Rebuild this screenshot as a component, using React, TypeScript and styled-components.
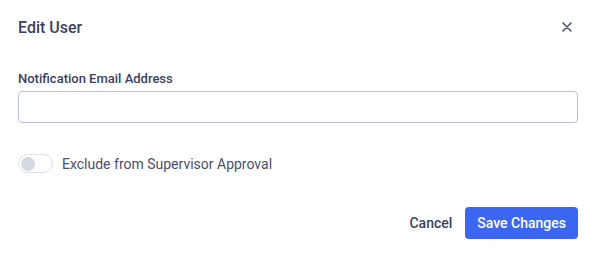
import React, { useState } from "react";
import styled, { createGlobalStyle } from "styled-components";

const GlobalStyle = createGlobalStyle`
  html, body {
    margin: 0;
    background: #ffffff;
    font-family: Roboto, "Liberation Sans", Arial, sans-serif;
  }
`;

const Modal = styled.div`
  width: 595px;
  height: 253px;
  box-sizing: border-box;
  padding: 0 17px 0 18px;
  display: flex;
  flex-direction: column;
`;

const Header = styled.div`
  display: flex;
  align-items: center;
  justify-content: space-between;
  height: 54px;
`;

const Title = styled.h2`
  margin: 0;
  font-size: 16px;
  font-weight: 500;
  color: #3b4261;
`;

const CloseButton = styled.button`
  border: none;
  background: none;
  padding: 0;
  margin-right: 6px;
  width: 10px;
  height: 10px;
  display: flex;
  align-items: center;
  justify-content: center;
  color: #4a5270;
  cursor: pointer;
`;

const Field = styled.div`
  display: flex;
  flex-direction: column;
  gap: 5px;
  margin-top: 17px;
`;

const Label = styled.label`
  font-size: 13px;
  line-height: 15px;
  font-weight: 500;
  color: #3b4261;
`;

const Input = styled.input`
  box-sizing: border-box;
  width: 100%;
  height: 32px;
  border: 1px solid #b8c2dd;
  border-radius: 4px;
  padding: 0 10px;
  font: inherit;
  font-size: 14px;
  outline: none;
`;

const ToggleRow = styled.label`
  display: flex;
  align-items: center;
  gap: 9px;
  margin-top: 31px;
  font-size: 14px;
  color: #4a4f6b;
  cursor: pointer;
`;

const Track = styled.span<{ $on: boolean }>`
  box-sizing: border-box;
  width: 35px;
  height: 19px;
  border-radius: 10px;
  border: 1px solid ${(p) => (p.$on ? "#3a66f0" : "#dde1ec")};
  background: ${(p) => (p.$on ? "#3a66f0" : "#ffffff")};
  display: flex;
  align-items: center;
  padding: 0 2px;
  justify-content: ${(p) => (p.$on ? "flex-end" : "flex-start")};
`;

const Knob = styled.span<{ $on: boolean }>`
  width: 14px;
  height: 14px;
  border-radius: 50%;
  background: ${(p) => (p.$on ? "#ffffff" : "#d5d9e4")};
`;

const Footer = styled.div`
  display: flex;
  justify-content: flex-end;
  align-items: center;
  gap: 13px;
  margin-top: 34px;
`;

const Button = styled.button<{ $primary?: boolean }>`
  height: 32px;
  border-radius: 4px;
  border: none;
  font-family: inherit;
  font-size: 14px;
  font-weight: 500;
  padding: ${(p) => (p.$primary ? "0 12px" : "0")};
  background: ${(p) => (p.$primary ? "#3b66f1" : "transparent")};
  color: ${(p) => (p.$primary ? "#ffffff" : "#3b4261")};
  cursor: pointer;
`;

export default function App() {
  const [on, setOn] = useState(false);
  return (
    <>
      <GlobalStyle />
      <Modal>
        <Header>
          <Title>Edit User</Title>
          <CloseButton aria-label="Close">
            <svg width="10" height="10" viewBox="0 0 10 10">
              <path d="M1 1L9 9M9 1L1 9" stroke="currentColor" strokeWidth="1.6" strokeLinecap="round" />
            </svg>
          </CloseButton>
        </Header>
        <Field>
          <Label>Notification Email Address</Label>
          <Input type="email" />
        </Field>
        <ToggleRow onClick={() => setOn(!on)}>
          <Track $on={on}>
            <Knob $on={on} />
          </Track>
          Exclude from Supervisor Approval
        </ToggleRow>
        <Footer>
          <Button>Cancel</Button>
          <Button $primary>Save Changes</Button>
        </Footer>
      </Modal>
    </>
  );
}
